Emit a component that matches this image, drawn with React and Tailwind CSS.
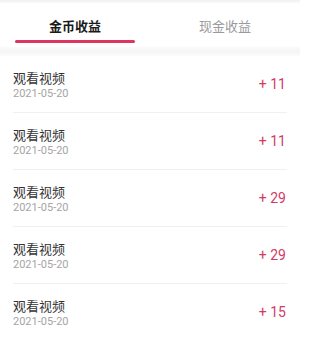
import React from "react";

const items = ["11", "11", "29", "29", "15"];

export default function App() {
  return (
    <div className="w-[300px] h-[339px] bg-white overflow-hidden" style={{ fontFamily: '"Noto Sans", Roboto, "Noto Sans CJK SC", sans-serif' }}>
      <div className="h-[3px] bg-gradient-to-b from-[#f0f0f0] to-[#fafafa]" />
      <div className="flex h-[44px] bg-white">
        <div className="flex-1 flex flex-col items-center">
          <div className="h-[37px] flex items-center pt-[9px] text-[13px] font-bold text-[#1a1a1a]" style={{ fontFamily: '"Noto Sans CJK SC", sans-serif' }}>金币收益</div>
          <div className="w-[120px] h-[3px] rounded-full bg-[#e0335f]" />
        </div>
        <div className="flex-1 flex flex-col items-center">
          <div className="h-[37px] flex items-center pt-[9px] text-[13px] text-[#9a9a9a]" style={{ fontFamily: '"Noto Sans CJK SC", sans-serif' }}>现金收益</div>
        </div>
      </div>
      <div className="h-[9px] bg-gradient-to-b from-[#fbfbfb] via-[#f5f5f5] to-[#fcfcfc]" />
      <div className="pl-[13px] pr-[13px]">
        {items.map((v, i) => (
          <div key={i} className="h-[57px] flex items-center justify-between border-b border-[#f0f0f0]">
            <div className="flex flex-col mt-[3px]">
              <div className="text-[13px] leading-[16px] text-[#333333]" style={{ fontFamily: '"Noto Sans CJK SC", sans-serif' }}>观看视频</div>
              <div className="text-[11px] leading-[16px] text-[#a5a5a5]" style={{ fontFamily: 'Roboto, sans-serif' }}>2021-05-20</div>
            </div>
            <div className="text-[14px] text-[#d23a66] pr-[1px] mt-[1px]" style={{ fontFamily: 'Roboto, sans-serif' }}>+ {v}</div>
          </div>
        ))}
      </div>
    </div>
  );
}
